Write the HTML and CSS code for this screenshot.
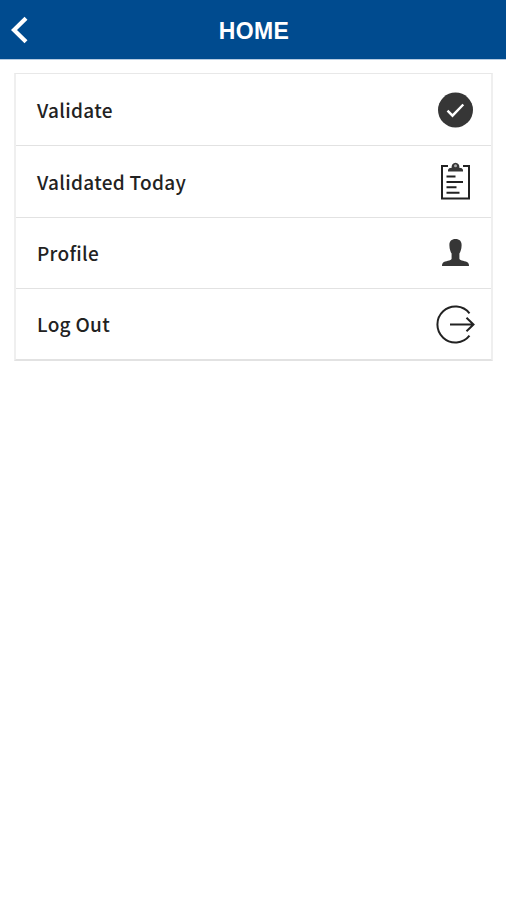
FILE: index.html
```
<!DOCTYPE html>
<html lang="en">
<head>
  <meta charset="UTF-8">
  <meta name="viewport" content="width=device-width, initial-scale=1.0">
  <title>Home</title>
  <link rel="stylesheet" href="styles.css">
</head>
<body>
  <header>
    <a href="#" class="back" aria-label="Back">
      <svg width="20" height="30" viewBox="0 0 20 30"><path d="M17 3.200 5 15l12 11.800"/></svg>
    </a>
    <h1>HOME</h1>
  </header>

  <nav class="menu">
    <a href="#" class="menu-item">
      <span>Validate</span>
      <svg class="icon" viewBox="0 0 40 40">
        <circle class="fill" cx="20.500" cy="20" r="17.500"/>
        <path class="check" d="M12.500 20.700l5 5 10.800-11.200"/>
      </svg>
    </a>
    <a href="#" class="menu-item">
      <span>Validated Today</span>
      <svg class="icon" viewBox="0 0 40 40">
        <path class="line" d="M13 5H7v32.500h27V5h-6"/>
        <path class="fill" d="M13 10.500V8.800q.5-1.800 3.700-2a3.900 4.200 0 1 1 7.600 0q3.200.2 3.700 2v1.700z"/>
        <circle class="hole" cx="20.500" cy="4.800" r="1.500"/>
        <path class="line" d="M11.500 15.600h9M11.500 21H28M11.500 26.300h10M11.500 31.700h13"/>
      </svg>
    </a>
    <a href="#" class="menu-item">
      <span>Profile</span>
      <svg class="icon" viewBox="0 0 40 40">
        <path class="fill" d="M20.500 6c4.200 0 6.300 2.500 6.100 6.400-.1 3.800-1.200 6.400-2.200 8.200v5.200c.4 2.300 6.500 2 8.600 4 .8.800 1 2 1 3.200H7c0-1.200.2-2.400 1-3.200 2.100-2 8.200-1.700 8.600-4v-5.200c-1-1.800-2.100-4.400-2.200-8.200C14.200 8.500 16.300 6 20.500 6z"/>
      </svg>
    </a>
    <a href="#" class="menu-item">
      <span>Log Out</span>
      <svg class="icon" viewBox="0 0 40 40">
        <path class="line" d="M34.500 9.300a18 18 0 1 0 0 22.400M15 20.500h23M31.500 13.700l7 6.800-7 6.800"/>
      </svg>
    </a>
  </nav>
</body>
</html>
```
FILE: styles.css
```
body {
  margin: 0;
  font-family: "Noto Sans CJK SC", "Noto Sans", sans-serif;
  background-color: #fff;
  color: #222;
}
header {
  display: grid;
  grid-template-columns: 40px 1fr 40px;
  align-items: center;
  height: 59px;
  background-color: #004b8f;
  border-bottom: 1px solid #b5cbe2;
}
.back {
  display: flex;
  padding-left: 9px;
}
.back path {
  fill: none;
  stroke: #fff;
  stroke-width: 4.2;
}
h1 {
  margin: 0;
  padding: 2px 0 0 2px;
  color: #fff;
  font-family: "Liberation Sans", Arial, sans-serif;
  font-size: 23px;
  line-height: 26px;
  letter-spacing: 0.4px;
  text-align: center;
}
.menu {
  margin: 13px 13px 0 14px;
  border: 1px solid #e6e6e6;
  border-width: 1px 2px 2px;
  border-color: #e8e8e8 #efefef #e2e2e2;
}
.menu-item {
  display: flex;
  align-items: center;
  justify-content: space-between;
  box-sizing: border-box;
  height: 71.25px;
  padding: 0 16px 0 21px;
  color: #222;
  font-size: 19px;
  font-weight: 500;
  letter-spacing: 0.3px;
  text-decoration: none;
}
.menu-item + .menu-item {
  border-top: 1px solid #e2e2e2;
}
.icon {
  width: 40px;
  height: 40px;
}
.fill {
  fill: #363636;
}
.hole {
  fill: #aaa;
}
.line,
.check {
  fill: none;
  stroke: #222;
  stroke-width: 2;
}
.check {
  stroke: #fff;
  stroke-width: 2.4;
}
```
